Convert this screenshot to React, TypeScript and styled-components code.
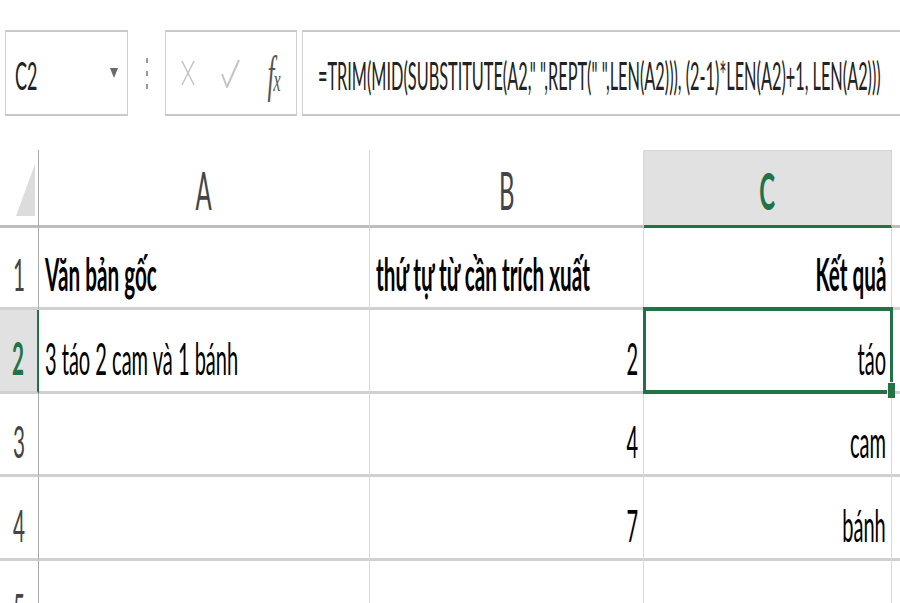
import React from "react";
import styled, { createGlobalStyle } from "styled-components";

const GREEN = "#217346";

const GlobalStyle = createGlobalStyle`
  html, body { margin: 0; padding: 0; background: #ffffff; }
  body { font-family: Lato, "Open Sans", "DejaVu Sans", sans-serif; }
`;

const Page = styled.div`
  width: 900px;
  height: 603px;
  overflow: hidden;
  background: #ffffff;
  display: flex;
  flex-direction: column;
`;

/* ---------- text squeezing (the screenshot is horizontally compressed) ---------- */
const Squeeze = styled.span<{ $origin?: "left" | "right" | "center"; $scale?: number }>`
  display: inline-block;
  flex-shrink: 0;
  white-space: nowrap;
  transform: scaleX(${(p) => p.$scale ?? 0.46});
  transform-origin: ${(p) => p.$origin ?? "left"} center;
`;

/* ---------- formula bar ---------- */
const FormulaBar = styled.div`
  flex-shrink: 0;
  display: flex;
  align-items: stretch;
  height: 86px;
  margin-top: 30px;
  padding-left: 5px;
`;

const BarBox = styled.div`
  box-sizing: border-box;
  flex-shrink: 0;
  display: flex;
  align-items: center;
  border-top: 2px solid #c8c8c8;
  border-bottom: 2px solid #c8c8c8;
  border-left: 1px solid #cfcfcf;
  border-right: 1px solid #cfcfcf;
  background: #ffffff;
`;

const NameBox = styled(BarBox)`
  width: 123px;
  padding-left: 9px;
  padding-right: 9px;
  justify-content: space-between;
`;

const NameText = styled.span`
  font-size: 39px;
  line-height: 1;
  color: #222222;
  margin-top: 4px;
`;

const Separator = styled.div`
  flex-shrink: 0;
  width: 37px;
  display: flex;
  flex-direction: column;
  align-items: center;
  justify-content: center;
  gap: 8px;
`;

const Dot = styled.span`
  width: 2px;
  height: 5px;
  background: #9a9a9a;
`;

const ButtonsBox = styled(BarBox)`
  width: 132px;
  justify-content: space-around;
`;

const ButtonSlot = styled.div`
  width: 44px;
  display: flex;
  align-items: center;
  justify-content: center;
`;

const FxText = styled.span`
  font-family: "Liberation Serif", "DejaVu Serif", serif;
  font-style: italic;
  font-size: 50px;
  line-height: 1;
  color: #555555;
  display: inline-block;
  transform: scaleX(0.5);
  white-space: nowrap;
  margin-top: 2px;
  sub {
    font-size: 32px;
    vertical-align: 0;
    margin-left: -2px;
  }
`;

const FormulaInput = styled(BarBox)`
  margin-left: 5px;
  width: 640px;
  padding-left: 15px;
`;

const FormulaText = styled.span`
  font-size: 39px;
  line-height: 1;
  color: #222222;
  margin-top: 4px;
`;

/* ---------- grid ---------- */
const Sheet = styled.div`
  flex-shrink: 0;
  margin-top: 34px;
  display: grid;
  grid-template-columns: 39px 331px 274px 248px 40px;
  grid-template-rows: 78px 82px 84px 83px 84px 84px;
`;

const Corner = styled.div`
  box-sizing: border-box;
  border-right: 1px solid #a8a8a8;
  border-bottom: 3px solid #bdbdbd;
  display: flex;
  align-items: flex-end;
  justify-content: flex-end;
  padding: 0 3px 9px 0;
`;

const ColHeader = styled.div<{ $active?: boolean }>`
  box-sizing: border-box;
  display: flex;
  align-items: center;
  justify-content: center;
  padding-top: 4px;
  font-size: 52px;
  line-height: 1;
  font-weight: ${(p) => (p.$active ? 700 : 400)};
  color: ${(p) => (p.$active ? GREEN : "#444444")};
  background: ${(p) => (p.$active ? "#e1e1e1" : "#ffffff")};
  border-right: 1px solid ${(p) => (p.$active ? "#d0d0d0" : "#d6d6d6")};
  border-top: 1px solid ${(p) => (p.$active ? "#d6d6d6" : "transparent")};
  border-bottom: 3px solid ${(p) => (p.$active ? GREEN : "#bdbdbd")};
`;

const RowHeader = styled.div<{ $active?: boolean }>`
  box-sizing: border-box;
  display: flex;
  align-items: flex-end;
  justify-content: center;
  padding-bottom: 10px;
  font-size: 45px;
  line-height: 1;
  font-weight: ${(p) => (p.$active ? 700 : 400)};
  color: ${(p) => (p.$active ? GREEN : "#444444")};
  background: ${(p) => (p.$active ? "#e1e1e1" : "#ffffff")};
  border-right: ${(p) => (p.$active ? `2px solid ${GREEN}` : "1px solid #a8a8a8")};
  border-bottom: 3px solid #d0d0d0;
`;

const Cell = styled.div<{ $align?: "left" | "right"; $bold?: boolean; $selected?: boolean }>`
  box-sizing: border-box;
  position: relative;
  display: flex;
  align-items: flex-end;
  justify-content: ${(p) => (p.$align === "right" ? "flex-end" : "flex-start")};
  padding: 0 5px 10px 6px;
  font-size: 45px;
  line-height: 1;
  font-weight: ${(p) => (p.$bold ? 700 : 400)};
  color: #000000;
  border-right: 1px solid #d9d9d9;
  border-bottom: 3px solid #d0d0d0;
  ${(p) =>
    p.$selected
      ? `
    &::after {
      content: "";
      position: absolute;
      top: -3px;
      bottom: -3px;
      left: -1px;
      right: -2px;
      border-style: solid;
      border-color: ${GREEN};
      border-width: 4px 3px 4px 3px;
      pointer-events: none;
      z-index: 2;
    }
  `
      : ""}
`;

const FillHandle = styled.span`
  position: absolute;
  right: -4px;
  bottom: -7px;
  width: 7px;
  height: 15px;
  background: ${GREEN};
  box-shadow: -1px -1px 0 #ffffff;
  z-index: 3;
`;

/* ---------- icons ---------- */
const DropArrow = () => (
  <svg width="8" height="12" viewBox="0 0 8 12">
    <polygon points="0,1 8,1 4,11" fill="#6a6a6a" />
  </svg>
);

const CancelIcon = () => (
  <svg width="14" height="26" viewBox="0 0 14 26">
    <line x1="1" y1="1" x2="13" y2="25" stroke="#c4c4c4" strokeWidth="1.6" />
    <line x1="13" y1="1" x2="1" y2="25" stroke="#c4c4c4" strokeWidth="1.6" />
  </svg>
);

const EnterIcon = () => (
  <svg width="19" height="29" viewBox="0 0 19 29">
    <polyline points="1,15 6,28 18,1" fill="none" stroke="#c4c4c4" strokeWidth="2" strokeLinejoin="round" />
  </svg>
);

const CornerTriangle = () => (
  <svg width="19" height="52" viewBox="0 0 19 52">
    <polygon points="19,0 19,52 0,52" fill="#dcdcdc" />
  </svg>
);

const columns = ["A", "B", "C", ""];

type Row = { n: number; cells: { text: string; align?: "left" | "right"; bold?: boolean }[] };

const rows: Row[] = [
  {
    n: 1,
    cells: [
      { text: "Văn bản gốc", bold: true },
      { text: "thứ tự từ cần trích xuất", bold: true },
      { text: "Kết quả", bold: true, align: "right" },
      { text: "" },
    ],
  },
  {
    n: 2,
    cells: [
      { text: "3 táo 2 cam và 1 bánh" },
      { text: "2", align: "right" },
      { text: "táo", align: "right" },
      { text: "" },
    ],
  },
  { n: 3, cells: [{ text: "" }, { text: "4", align: "right" }, { text: "cam", align: "right" }, { text: "" }] },
  { n: 4, cells: [{ text: "" }, { text: "7", align: "right" }, { text: "bánh", align: "right" }, { text: "" }] },
  { n: 5, cells: [{ text: "" }, { text: "" }, { text: "" }, { text: "" }] },
];

export default function App() {
  return (
    <>
      <GlobalStyle />
      <Page>
        <FormulaBar>
          <NameBox>
            <NameText>
              <Squeeze>C2</Squeeze>
            </NameText>
            <DropArrow />
          </NameBox>
          <Separator>
            <Dot />
            <Dot />
            <Dot />
          </Separator>
          <ButtonsBox>
            <ButtonSlot>
              <CancelIcon />
            </ButtonSlot>
            <ButtonSlot>
              <EnterIcon />
            </ButtonSlot>
            <ButtonSlot>
              <FxText>
                f<sub>x</sub>
              </FxText>
            </ButtonSlot>
          </ButtonsBox>
          <FormulaInput>
            <FormulaText>
              <Squeeze $scale={0.418}>
                =TRIM(MID(SUBSTITUTE(A2," ",REPT(" ",LEN(A2))), (2-1)*LEN(A2)+1, LEN(A2)))
              </Squeeze>
            </FormulaText>
          </FormulaInput>
        </FormulaBar>

        <Sheet>
          <Corner>
            <CornerTriangle />
          </Corner>
          {columns.map((c, i) => (
            <ColHeader key={`h${i}`} $active={c === "C"}>
              <Squeeze $origin="center">{c}</Squeeze>
            </ColHeader>
          ))}
          {rows.map((r) => (
            <React.Fragment key={r.n}>
              <RowHeader $active={r.n === 2}>
                <Squeeze $origin="center">{r.n}</Squeeze>
              </RowHeader>
              {r.cells.map((cell, ci) => {
                const selected = r.n === 2 && ci === 2;
                return (
                  <Cell key={ci} $align={cell.align} $bold={cell.bold} $selected={selected}>
                    {cell.text && (
                      <Squeeze
                        $origin={cell.align === "right" ? "right" : "left"}
                        $scale={cell.bold ? 0.46 : 0.445}
                      >
                        {cell.text}
                      </Squeeze>
                    )}
                    {selected && <FillHandle />}
                  </Cell>
                );
              })}
            </React.Fragment>
          ))}
        </Sheet>
      </Page>
    </>
  );
}
